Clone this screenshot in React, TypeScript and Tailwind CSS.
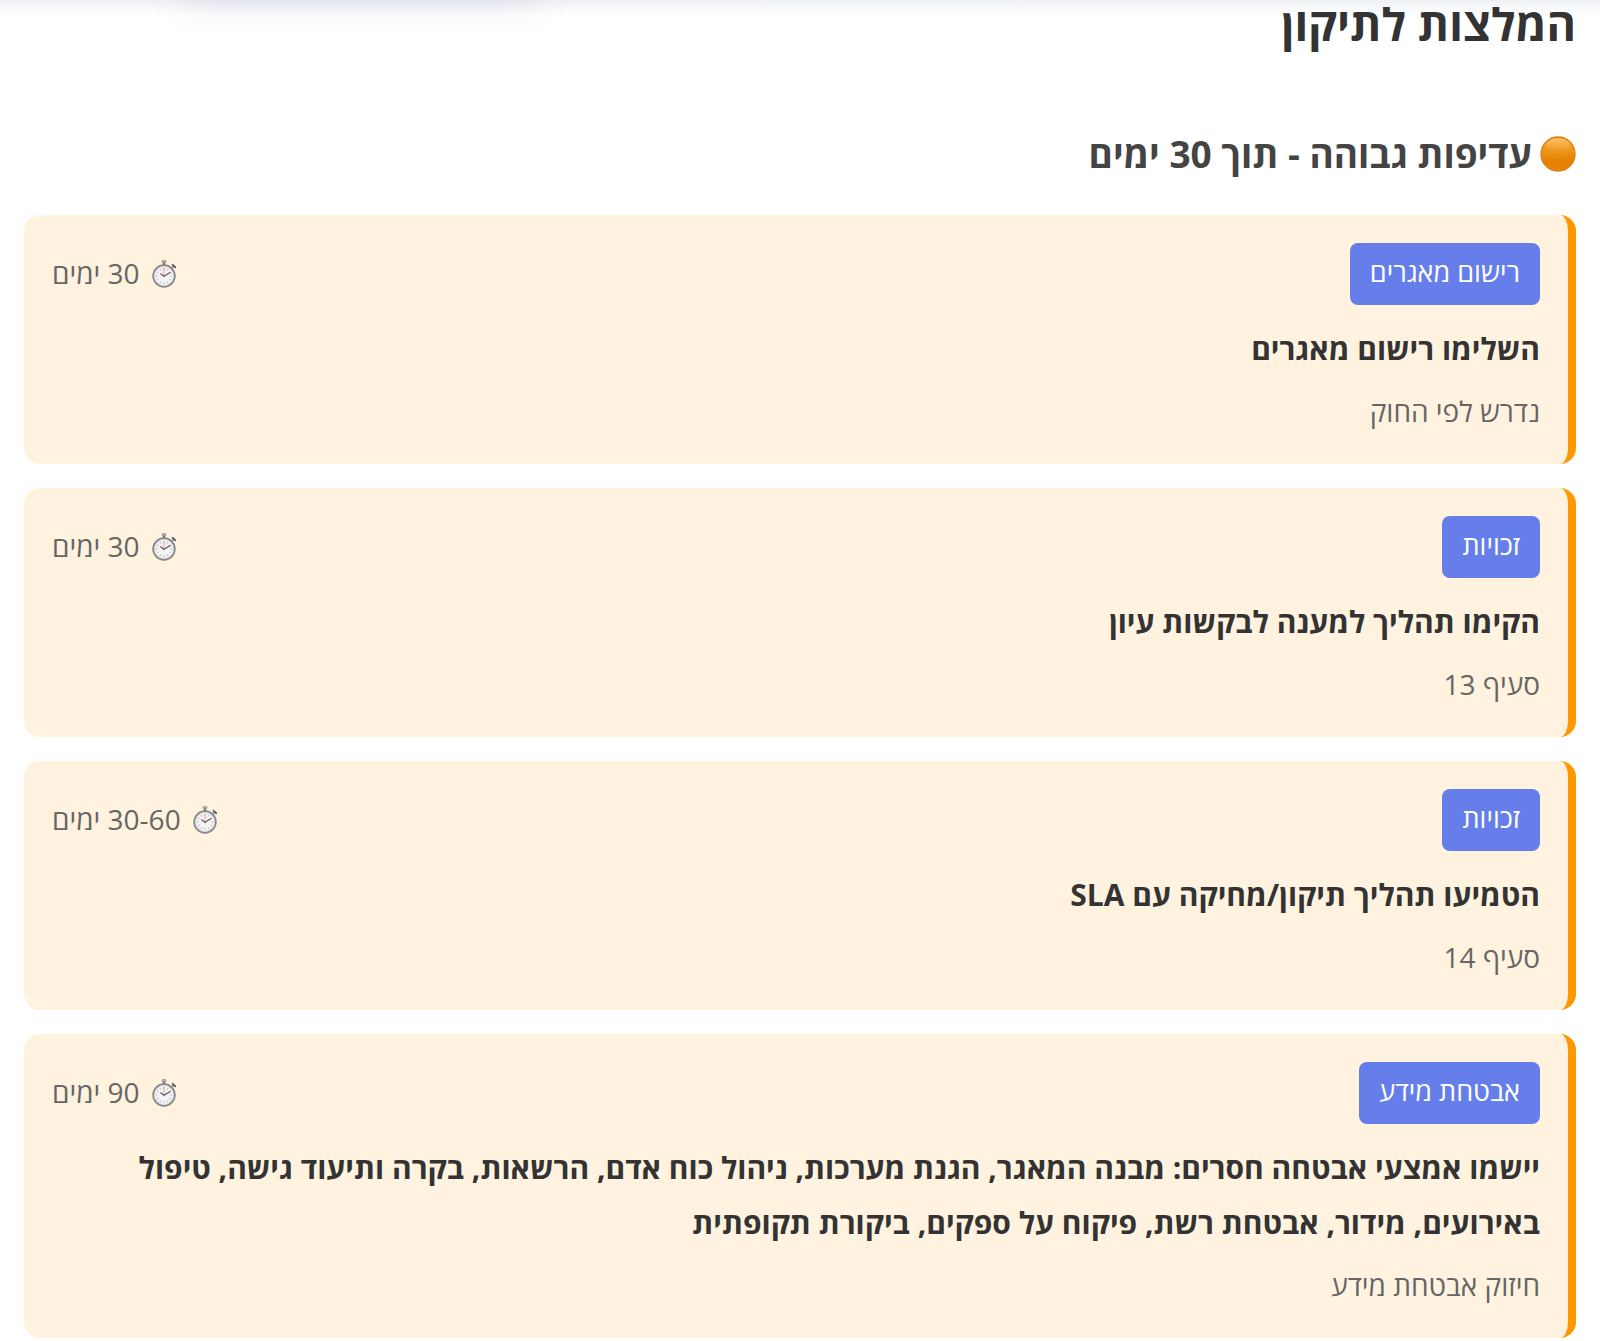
type Recommendation = {
  category: string;
  time: string;
  title: string;
  reason: string;
};

const recommendations: Recommendation[] = [
  { category: "רישום מאגרים", time: "30 ימים", title: "השלימו רישום מאגרים", reason: "נדרש לפי החוק" },
  { category: "זכויות", time: "30 ימים", title: "הקימו תהליך למענה לבקשות עיון", reason: "סעיף 13" },
  { category: "זכויות", time: "30-60 ימים", title: "הטמיעו תהליך תיקון/מחיקה עם SLA", reason: "סעיף 14" },
  {
    category: "אבטחת מידע",
    time: "90 ימים",
    title:
      "יישמו אמצעי אבטחה חסרים: מבנה המאגר, הגנת מערכות, ניהול כוח אדם, הרשאות, בקרה ותיעוד גישה, טיפול באירועים, מידור, אבטחת רשת, פיקוח על ספקים, ביקורת תקופתית",
    reason: "חיזוק אבטחת מידע",
  },
];

function OrangeDot() {
  return (
    <svg className="size-9 shrink-0" viewBox="0 0 36 36" aria-hidden="true">
      <defs>
        <linearGradient id="dot-fill" x1="0" y1="0" x2="0" y2="1">
          <stop offset="0" stopColor="#f6ab45" />
          <stop offset="0.3" stopColor="#f09a22" />
          <stop offset="0.75" stopColor="#e47f00" />
          <stop offset="1" stopColor="#e88408" />
        </linearGradient>
        <linearGradient id="dot-shine" x1="0" y1="0" x2="0" y2="1">
          <stop offset="0" stopColor="#ffcb80" stopOpacity="0.7" />
          <stop offset="1" stopColor="#f5a83c" stopOpacity="0" />
        </linearGradient>
      </defs>
      <circle cx="18" cy="18" r="17" fill="url(#dot-fill)" stroke="#d98314" strokeWidth="1.4" />
      <ellipse cx="18" cy="10" rx="12.5" ry="7.5" fill="url(#dot-shine)" />
    </svg>
  );
}

const ticks = [0, 30, 60, 90, 120, 150, 180, 210, 240, 270, 300, 330];

function Stopwatch() {
  return (
    <svg className="h-7 w-6 shrink-0" viewBox="0 0 24 28" aria-hidden="true">
      <rect x="10" y="0.5" width="4" height="2.6" rx="1" fill="#b9b2a8" stroke="#85807a" strokeWidth="0.6" />
      <rect x="10.9" y="2.8" width="2.2" height="2.6" fill="#77736e" />
      <path d="M19.4 8.2 21.8 6" stroke="#85807a" strokeWidth="1.4" />
      <path d="M20.7 4.9 23.2 7.3" stroke="#5d6063" strokeWidth="2" strokeLinecap="round" />
      <circle cx="12" cy="16" r="10.8" fill="#f3f3f3" stroke="#85878a" strokeWidth="1.8" />
      <circle cx="12" cy="16" r="9.4" fill="none" stroke="#d2d3d5" strokeWidth="0.8" />
      {ticks.map((angle) => (
        <path key={angle} d="M12 8v1.6" stroke="#a5a5a5" strokeWidth="0.8" transform={`rotate(${angle} 12 16)`} />
      ))}
      <path d="M12 17.5V8" stroke="#ee9a94" strokeWidth="0.9" />
      <path d="M8.6 13.8 12 16.3 18.2 12.5" fill="none" stroke="#5b5b5b" strokeWidth="1.1" strokeLinecap="round" />
    </svg>
  );
}

function RecommendationCard({ category, time, title, reason }: Recommendation) {
  return (
    <li className="rounded-2xl border-r-8 border-[#ff9800] bg-[#fff3e0] p-7">
      <div className="mb-4 flex items-center justify-between">
        <span className="rounded-lg bg-[#667eea] px-5 pt-1.5 pb-2.5 text-[27px] leading-[46px] font-medium text-white">
          {category}
        </span>
        <span className="flex items-center gap-3 text-[28px] leading-[46px] font-medium text-[#666]">
          <Stopwatch />
          <span className="pb-0.5">{time}</span>
        </span>
      </div>
      <h4 className="mb-2.5 text-[30px] leading-[55px] font-bold text-[#333]">{title}</h4>
      <p className="text-[28px] leading-[50px] text-[#666]">{reason}</p>
    </li>
  );
}

export default function App() {
  return (
    <main
      dir="rtl"
      lang="he"
      className="relative overflow-hidden bg-white px-6 pb-1 font-['Open_Sans','Liberation_Sans',sans-serif]"
    >
      <div className="absolute inset-x-0 top-0 h-4 bg-linear-to-b from-[#eff2f5] to-white" />
      <div className="absolute -top-12 left-[180px] h-9 w-[360px] rounded-2xl shadow-[0_8px_40px_#5a5e9030]" />
      <h2 className="relative text-[45px] leading-[48px] font-bold text-[#333]">המלצות לתיקון</h2>
      <h3 className="mt-[72px] mb-[27px] flex items-center gap-2 text-[37px] leading-[68px] font-bold text-[#444]">
        <OrangeDot />
        עדיפות גבוהה - תוך 30 ימים
      </h3>
      <ul className="flex flex-col gap-6">
        {recommendations.map((item) => (
          <RecommendationCard key={item.title} {...item} />
        ))}
      </ul>
    </main>
  );
}
